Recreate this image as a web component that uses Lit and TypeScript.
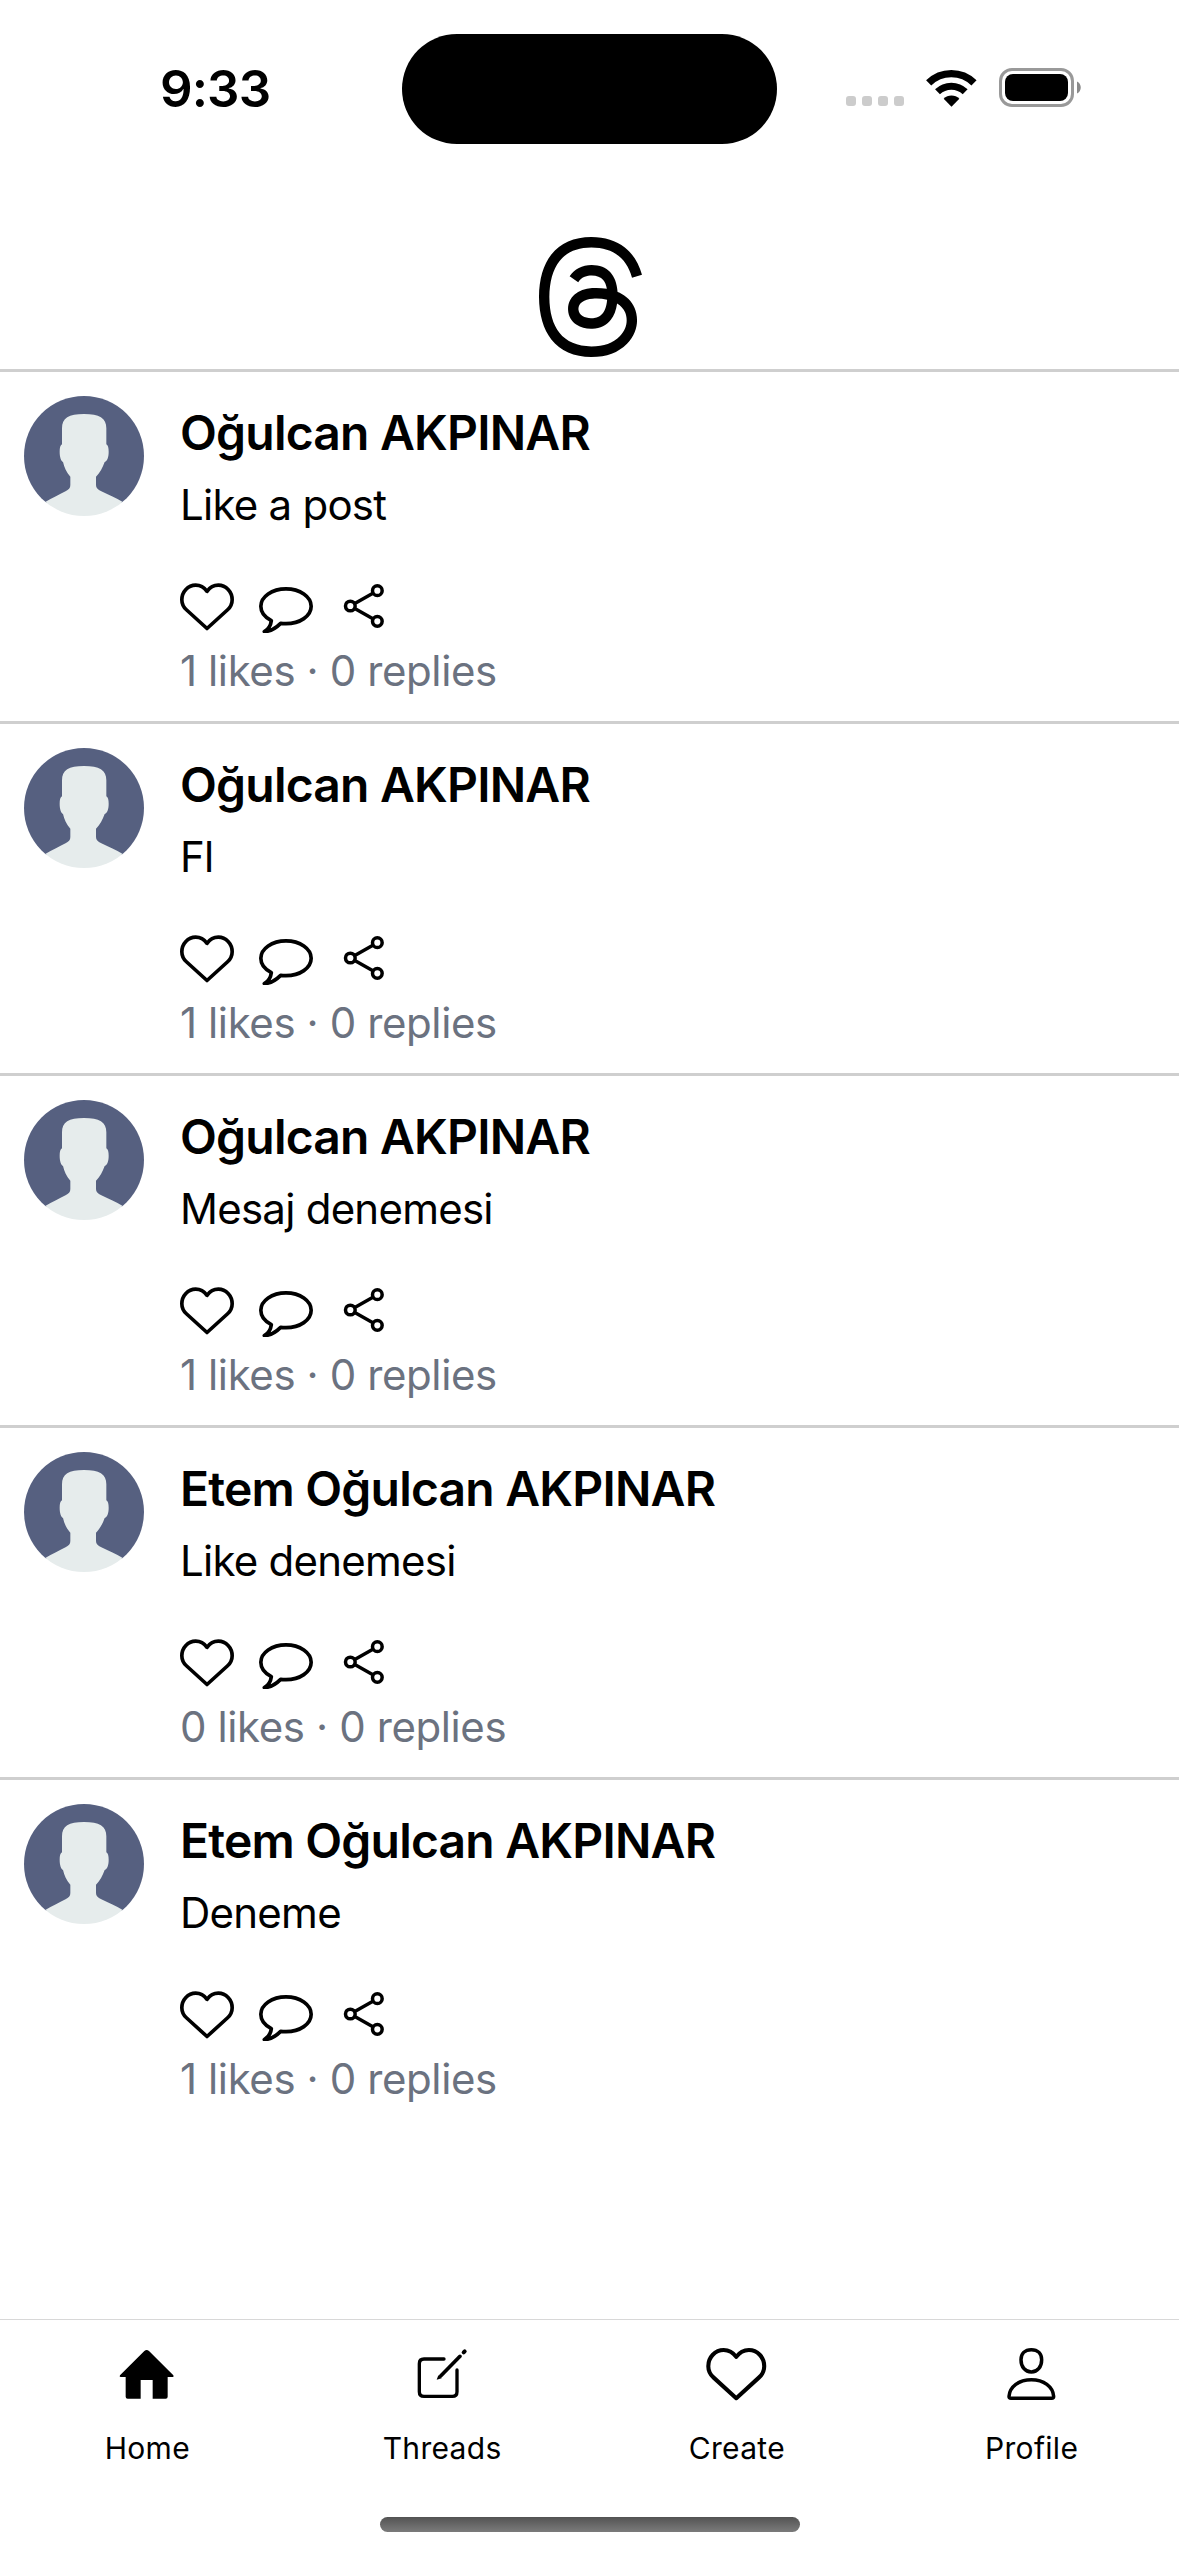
import { LitElement, html, css, svg } from "lit";
import { customElement, property } from "lit/decorators.js";

interface Post {
  author: string;
  text: string;
  likes: number;
  replies: number;
}

const POSTS: Post[] = [
  { author: "Oğulcan AKPINAR", text: "Like a post", likes: 1, replies: 0 },
  { author: "Oğulcan AKPINAR", text: "Fl", likes: 1, replies: 0 },
  { author: "Oğulcan AKPINAR", text: "Mesaj denemesi", likes: 1, replies: 0 },
  { author: "Etem Oğulcan AKPINAR", text: "Like denemesi", likes: 0, replies: 0 },
  { author: "Etem Oğulcan AKPINAR", text: "Deneme", likes: 1, replies: 0 },
];

const heartPath = svg`<path d="M111 63C103 52 90 44.500 77 44.500C54 44.500 35.500 64 35.500 88C35.500 101 41 111 50 119L111 174.500L172 119C181 111 186.500 101 186.500 88C186.500 64 168 44.500 145 44.500C132 44.500 119 52 111 63Z" fill="none" stroke="#000" stroke-width="11" stroke-linejoin="round"/>`;

@customElement("status-bar")
class StatusBar extends LitElement {
  static styles = css`
    :host { display: block; }
    .bar { display: grid; grid-template-columns: 402px 375px 402px; height: 177px; padding-top: 33px; box-sizing: border-box; }
    .time { padding-left: 160px; font-size: 51px; font-weight: 600; line-height: 111px; letter-spacing: -0.9px; }
    .time span { display: block; height: 111px; }
    .island { height: 110.600px; margin-top: 0.500px; border-radius: 56px; background: #000; }
    .right { display: flex; height: 111px; padding-left: 69px; }
    .dots { display: flex; gap: 6px; margin-top: 63px; }
    .dot { width: 10px; height: 10px; border-radius: 3px; background: #ccc; }
    .wifi { width: 51px; height: 38px; margin: 35.500px 0 0 22px; }
    .battery { width: 83px; height: 39px; margin: 35px 0 0 22px; }
  `;
  render() {
    return html`<div class="bar">
      <div class="time"><span>9:33</span></div>
      <div class="island"></div>
      <div class="right">
        <div class="dots">${[0, 1, 2, 3].map(() => html`<i class="dot"></i>`)}</div>
        <svg class="wifi" viewBox="318 55 153 114">
          <path d="M326 96.500A97 97 0 0 1 462 96.500" fill="none" stroke="#000" stroke-width="22"/>
          <path d="M352.500 123.500A59.500 59.500 0 0 1 435.500 123.500" fill="none" stroke="#000" stroke-width="21"/>
          <path d="M394.500 168L371 144.500A33 33 0 0 1 418 144.500Z"/>
        </svg>
        <svg class="battery" viewBox="0 0 83 39">
          <rect x="1.500" y="1.500" width="72" height="36" rx="11.500" fill="none" stroke="#999" stroke-width="3"/>
          <rect x="6" y="6" width="63" height="27" rx="8"/>
          <path d="M78 13.500C83 15.500 83 23.500 78 25.500Z" fill="#8a8a8a"/>
        </svg>
      </div>
    </div>`;
  }
}

@customElement("post-item")
class PostItem extends LitElement {
  @property({ attribute: false }) post!: Post;
  static styles = css`
    :host { display: block; }
    .post { display: flex; gap: 36px; height: 349px; padding: 24px 24px 0; box-sizing: border-box; }
    .avatar { width: 120px; height: 120px; flex: none; }
    .name { margin-top: 8px; font-size: 48px; font-weight: 600; line-height: 57px; height: 57px; letter-spacing: -0.8px; white-space: nowrap; }
    .text { margin-top: 19px; font-size: 42px; line-height: 50px; height: 50px; letter-spacing: -0.75px; white-space: nowrap; }
    .icons { display: flex; margin: 52px 0 0; height: 52px; }
    .heart { width: 54px; height: 48px; margin-top: 0.667px; }
    .bubble { width: 54px; height: 46px; margin: 5px 0 0 25px; }
    .share { width: 44px; height: 48px; margin: 0 0 0 29px; }
    .stats { margin-top: 12px; font-size: 42px; line-height: 50px; letter-spacing: -0.4px; color: #6b7280; white-space: nowrap; }
  `;
  render() {
    const p = this.post;
    return html`<article class="post">
      <svg class="avatar" viewBox="42 33 360 360">
        <defs><clipPath id="round"><circle cx="222" cy="213" r="180"/></clipPath></defs>
        <g clip-path="url(#round)">
          <rect x="42" y="33" width="360" height="320" fill="#566080"/>
          <path fill="#e6ecec" d="M156 178V130C156 99 176 87 222 87C268 87 289 99 289 130V178C294 181 296 188 296 200C296 216 292 227 284 231C278 248 270 263 258 275V300C258 309 263 313 274 319C298 331 318 339 337 350L380 400H64L107 350C126 339 146 330 168 318C177 313 181 309 181 300V275C169 262 163 248 159 231C153 227 149 216 149 200C149 188 151 181 156 178Z"/>
        </g>
      </svg>
      <div>
        <div class="name">${p.author}</div>
        <div class="text">${p.text}</div>
        <div class="icons">
          <svg class="heart" viewBox="30 38 162 144">${heartPath}</svg>
          <svg class="bubble" viewBox="267 51 162 138">
            <path d="M332 160C337 161 342 161 348 161C390 161 423.500 138 423.500 109C423.500 80 390 56.500 348 56.500C306 56.500 272.500 80 272.500 109C272.500 127 284 142 304 152C302 167 295 178 283 185C303 184 318 174 332 160Z" fill="none" stroke="#000" stroke-width="11" stroke-linejoin="round"/>
          </svg>
          <svg class="share" viewBox="516 36 132 144" fill="none" stroke="#000" stroke-width="10.500">
            <circle cx="541" cy="108" r="14.500"/><circle cx="622" cy="62" r="14.500"/><circle cx="622" cy="154" r="14.500"/>
            <path d="M553 101L610 69M553 115L610 147"/>
          </svg>
        </div>
        <div class="stats">${p.likes} likes · ${p.replies} replies</div>
      </div>
    </article>`;
  }
}

@customElement("tab-bar")
class TabBar extends LitElement {
  static styles = css`
    :host { display: block; }
    .bar { display: grid; grid-template-columns: repeat(4, 1fr); border-top: 1px solid #d8d8d8; height: 198px; box-sizing: border-box; }
    .tab { display: flex; flex-direction: column; align-items: center; padding-top: 26px; }
    .icon { width: 66px; height: 60px; }
    .label { margin-top: 22.500px; font-size: 30px; line-height: 38px; letter-spacing: 0.3px; }
    .home { display: flex; justify-content: center; height: 39px; }
    .pill { width: 420px; height: 15px; border-radius: 8px; background: linear-gradient(#535353, #7b7b7b); }
  `;
  render() {
    return html`<nav class="bar">
        <div class="tab">
          <svg class="icon" viewBox="73 48 198 180">
            <path d="M164 63Q171 57 178 63L251 136Q254 141 249 141H234V200Q234 206 228 206H189V150H153V206H114Q108 206 108 200V141H93Q88 141 91 136Z"/>
          </svg>
          <span class="label">Home</span>
        </div>
        <div class="tab">
          <svg class="icon" viewBox="957 48 198 180" fill="none" stroke="#000" stroke-width="10" stroke-linecap="round">
            <path d="M1062 87H1002Q988 87 988 101V185Q988 199 1002 199H1087Q1101 199 1101 185V120"/>
            <path d="M1052 138L1110 79" stroke-width="11"/>
            <path d="M1040 149L1045 136L1055 145Z" fill="#000" stroke="none"/>
            <path d="M1121 67L1124 64" stroke-width="12"/>
          </svg>
          <span class="label">Threads</span>
        </div>
        <div class="tab">
          <svg class="icon" viewBox="23.900 33.600 178.200 162">${heartPath}</svg>
          <span class="label">Create</span>
        </div>
        <div class="tab">
          <svg class="icon" viewBox="956 48 198 180" fill="none" stroke="#000" stroke-width="10.500">
            <path d="M1053 59C1073 59 1084 72 1084 89C1084 110 1072 126 1053 126C1034 126 1022 110 1022 89C1022 72 1033 59 1053 59Z"/>
            <path d="M986 199C988 170 1016 149 1053 149C1090 149 1118 170 1120 199Q1120 205 1114 205H992Q986 205 986 199Z"/>
          </svg>
          <span class="label">Profile</span>
        </div>
      </nav>
      <div class="home"><div class="pill"></div></div>`;
  }
}

@customElement("app-root")
class AppRoot extends LitElement {
  static styles = css`
    :host { display: flex; flex-direction: column; width: 1179px; height: 2556px; overflow: hidden; background: #fff; color: #000; font-family: Inter, "Liberation Sans", sans-serif; }
    .header { display: flex; justify-content: center; height: 192px; padding-top: 60px; box-sizing: border-box; }
    .logo { width: 103px; height: 120px; margin-left: 1px; }
    .feed { flex: 1; display: flex; flex-direction: column; min-height: 0; }
    .row { border-top: 3px solid #cfcfcf; }
  `;
  render() {
    return html`<status-bar></status-bar>
      <header class="header">
        <svg class="logo" viewBox="1.472 0 21.060 24" preserveAspectRatio="none">
          <path d="M12.186 24h-.007c-3.581-.024-6.334-1.205-8.184-3.509C2.350 18.440 1.500 15.586 1.472 12.010v-.017c.030-3.579.879-6.430 2.525-8.482C5.845 1.205 8.600.024 12.180 0h.014c2.746.020 5.043.725 6.826 2.098 1.677 1.290 2.858 3.130 3.509 5.467l-2.040.569c-1.104-3.960-3.898-5.984-8.304-6.015-2.910.022-5.110.936-6.540 2.717C4.307 6.504 3.616 8.914 3.589 12c.027 3.086.718 5.496 2.057 7.164 1.430 1.783 3.631 2.698 6.540 2.717 2.623-.020 4.358-.631 5.800-2.045 1.647-1.613 1.618-3.593 1.090-4.798-.310-.710-.873-1.300-1.634-1.750-.192 1.352-.622 2.446-1.284 3.272-.886 1.102-2.140 1.704-3.730 1.790-1.202.065-2.361-.218-3.259-.801-1.063-.689-1.685-1.740-1.752-2.964-.065-1.190.408-2.285 1.330-3.082.880-.760 2.119-1.207 3.583-1.291a13.853 13.853 0 0 1 3.020.142c-.126-.742-.375-1.332-.750-1.757-.513-.586-1.308-.883-2.359-.890h-.029c-.844 0-1.992.232-2.721 1.320L7.734 7.847c.980-1.454 2.568-2.256 4.478-2.256h.044c3.194.020 5.097 1.975 5.287 5.388.108.046.216.094.321.142 1.490.700 2.580 1.761 3.154 3.070.797 1.820.871 4.790-1.548 7.158-1.850 1.810-4.094 2.628-7.277 2.650Zm1.003-11.690c-.242 0-.487.007-.739.021-1.836.103-2.980.946-2.916 2.143.067 1.256 1.452 1.839 2.784 1.767 1.224-.065 2.818-.543 3.086-3.710a10.500 10.500 0 0 0-2.215-.221z"/>
        </svg>
      </header>
      <main class="feed">
        ${POSTS.map((p) => html`<div class="row"><post-item .post=${p}></post-item></div>`)}
      </main>
      <tab-bar></tab-bar>`;
  }
}
